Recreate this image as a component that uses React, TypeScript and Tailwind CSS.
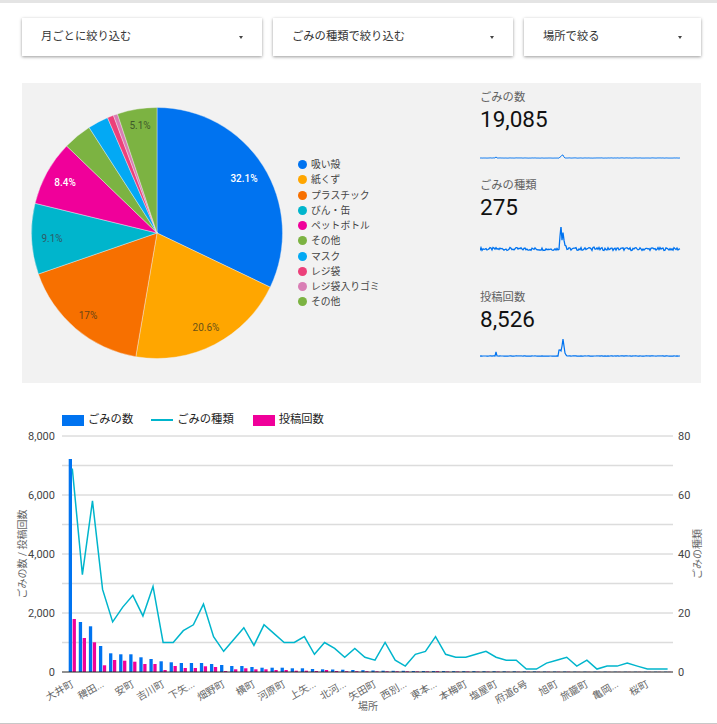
const font = "font-['Roboto','Noto_Sans_CJK_JP',sans-serif]"

const slices = [
  { name: '吸い殻', pct: 32.1, color: '#0073f0' },
  { name: '紙くず', pct: 20.6, color: '#ffa600' },
  { name: 'プラスチック', pct: 17, color: '#f77000' },
  { name: 'びん・缶', pct: 9.1, color: '#00b5cc' },
  { name: 'ペットボトル', pct: 8.4, color: '#f0009a' },
  { name: 'その他', pct: 3.7, color: '#7cb342' },
  { name: 'マスク', pct: 2.65, color: '#03a9f4' },
  { name: 'レジ袋', pct: 0.8, color: '#ec407a' },
  { name: 'レジ袋入りゴミ', pct: 0.55, color: '#d97eb5' },
  { name: 'その他', pct: 5.1, color: '#7cb342' },
]

const kinds = [69, 33, 58, 28, 17, 22, 26, 19, 29, 10, 10, 14, 16, 23, 12, 7, 11, 15, 9, 16, 13, 10, 10, 12, 6, 10, 8, 5, 8, 5, 4, 10, 4, 2, 6, 7, 12, 6, 5, 5, 6, 7, 5, 4, 4, 1, 1, 3, 4, 5, 2, 4, 1, 2, 2, 3, 2, 1, 1, 1]
// bar heights in px, read off the picture
const bluePx = [213, 50, 45.7, 26, 18.7, 17.7, 17.7, 14.7, 13, 10.7, 9.7, 9, 9, 9, 8, 7, 6, 6, 5, 4.3, 4.3, 4.3, 3.7, 3.7, 3, 2.7, 2.5, 2.3, 2, 1.8, 1.5, 1.3, 1.2, 1.2, 1, 1, 1, 1, 0.9, 0.9, 0.9, 0.8, 0.8, 0.7, 0.7, 0.6, 0.6, 0.5, 0.5, 0.5, 0.4, 0.4, 0.4, 0.4, 0.3, 0.3, 0.3, 0.3, 0.3, 0.3]
const pinkPx = [53, 34, 29.7, 6.7, 12, 11.3, 10.3, 8, 8, 2, 6, 4, 4, 5.7, 5, 1, 2.7, 3.7, 2.7, 2.7, 2, 2, 1.3, 1.3, 1, 2, 1, 0.8, 0.8, 0.8, 0.7, 0.7, 0.7, 0.7, 0.6, 0.6, 0.8, 0.5, 0.5, 0.5, 0.4, 0.4, 0.4, 0.3, 0.3, 0.3, 0.3, 0.3, 0.3, 0.3, 0.2, 0.2, 0.2, 0.2, 0.2, 0.2, 0.2, 0.2, 0.2, 0.2]
const towns = ['大井町', '稗田...', '安町', '吉川町', '下矢...', '畑野町', '横町', '河原町', '上矢...', '北河...', '矢田町', '西別...', '東本...', '本梅町', '塩屋町', '府道6号', '旭町', '旅籠町', '亀岡...', '桜町']

function Filter({ label, width }: { label: string; width: string }) {
  return (
    <div className={`${width} h-[38px] flex items-center justify-between px-[19px] bg-white shadow-[0_1px_3px_rgba(0,0,0,0.4)] text-[11.3px] text-[#333]`}>
      <span>{label}</span>
      <span className="w-0 h-0 border-x-[2.5px] border-x-transparent border-t-[3px] border-t-[#444]" />
    </div>
  )
}

function Pie() {
  const cx = 135
  const cy = 126
  const r = 125.5
  let acc = 0
  const pt = (p: number, rad: number) => {
    const a = (p / 100) * Math.PI * 2
    return [cx + rad * Math.sin(a), cy - rad * Math.cos(a)]
  }
  return (
    <svg width="270" height="252" className="shrink-0">
      {slices.map((s, i) => {
        const [x1, y1] = pt(acc, r)
        const [x2, y2] = pt(acc + s.pct, r)
        acc += s.pct
        return <path key={i} d={`M${cx} ${cy}L${x1} ${y1}A${r} ${r} 0 0 1 ${x2} ${y2}Z`} fill={s.color} stroke="#f2f2f2" strokeWidth="0.4" />
      })}
      <text x="222" y="75" textAnchor="middle" fontSize="10" fill="#ffffff" fontWeight="500">32.1%</text>
      <text x="184" y="224" textAnchor="middle" fontSize="10" fill="#6b5218">20.6%</text>
      <text x="66" y="212" textAnchor="middle" fontSize="10" fill="#6b4416">17%</text>
      <text x="30" y="135" textAnchor="middle" fontSize="10" fill="#2f5a66">9.1%</text>
      <text x="43" y="79" textAnchor="middle" fontSize="10" fill="#ffffff" fontWeight="500">8.4%</text>
      <text x="118" y="22" textAnchor="middle" fontSize="10" fill="#3f5a2a">5.1%</text>
    </svg>
  )
}

function Legend() {
  return (
    <ul className="flex flex-col w-[96px] pl-[6px] pt-[50px] text-[9.8px] leading-[15.25px] text-[#444]">
      {slices.map((s, i) => (
        <li key={i} className="flex items-center gap-[4px] whitespace-nowrap">
          <span className="w-[9px] h-[9px] rounded-full" style={{ backgroundColor: s.color }} />
          {s.name}
        </li>
      ))}
    </ul>
  )
}

// repeatable noise so the sparkline doesn't change between runs
const noise = (i: number) => {
  const v = Math.sin(i * 12.9898) * 43758.5453
  return v - Math.floor(v) - 0.5
}

function Spark({ base, amp, width, peaks }: { base: number; amp: number; width: number; peaks: Record<number, number> }) {
  const pts = Array.from({ length: 201 }, (_, i) => {
    const y = base - (peaks[i] ?? 0) - noise(i) * amp
    return `${i},${y.toFixed(1)}`
  }).join(' ')
  return (
    <svg width="201" height="30" className="block">
      <polyline points={pts} fill="none" stroke="#0073f0" strokeWidth={width} />
    </svg>
  )
}

function Metric({ label, value, height, gap, children }: { label: string; value: string; height: string; gap: string; children: React.ReactNode }) {
  return (
    <div className={height}>
      <div className="text-[11.3px] leading-[16px] text-[#616161]">{label}</div>
      <div className="text-[22.5px] leading-[28px] -mt-[1px] text-[#111]">{value}</div>
      <div className={gap}>{children}</div>
    </div>
  )
}

function Combo() {
  const zero = 244
  const left = 62
  const right = 673
  const cx = (i: number) => 72.3 + i * 10.09
  const grid = [1, 2, 3, 4, 5, 6, 7, 8]
  const linePts = kinds.map((v, i) => `${cx(i)},${zero - v * 2.95}`).join(' ')
  return (
    <svg width="717" height="295" className="block">
      {grid.map(g => (
        <line key={g} x1={left} x2={right} y1={zero - g * 29.5} y2={zero - g * 29.5} stroke={g % 2 ? '#dcdcdc' : '#cccccc'} strokeWidth={g % 2 ? 1.4 : 1} />
      ))}
      {bluePx.map((h, i) => (
        <rect key={i} x={cx(i) - 3.6} y={zero - h} width="3.3" height={h} fill="#0073f0" />
      ))}
      {pinkPx.map((h, i) => (
        <rect key={i} x={cx(i) + 0.3} y={zero - h} width="3.3" height={h} fill="#f0009a" />
      ))}
      <line x1={left} x2={right} y1={zero} y2={zero} stroke="#222" strokeWidth="1" />
      <polyline points={linePts} fill="none" stroke="#00b5cc" strokeWidth="1.5" />
      {[0, 2000, 4000, 6000, 8000].map((v, i) => (
        <text key={v} x="55" y={zero - i * 59 + 4} textAnchor="end" fontSize="11" fill="#444">{v.toLocaleString('en-US')}</text>
      ))}
      {[0, 20, 40, 60, 80].map((v, i) => (
        <text key={v} x="678" y={zero - i * 59 + 4} fontSize="11" fill="#444">{v}</text>
      ))}
      {towns.map((t, i) => {
        const x = cx(i * 3) + 2
        const y = zero + 14
        return <text key={i} x={x} y={y} textAnchor="end" fontSize="10" fill="#666" transform={`rotate(-30 ${x} ${y})`}>{t}</text>
      })}
      <text x="368" y="282" textAnchor="middle" fontSize="10" fill="#666">場所</text>
      <text transform="translate(26 126) rotate(-90)" textAnchor="middle" fontSize="10" fill="#666">ごみの数 / 投稿回数</text>
      <text transform="translate(701 126) rotate(-90)" textAnchor="middle" fontSize="10" fill="#666">ごみの種類</text>
    </svg>
  )
}

export default function App() {
  return (
    <div className={`${font} w-[717px] h-[724px] bg-white border-b border-b-[#c8c8c8] overflow-hidden`}>
      <div className="h-[3px] bg-[#e4e4e4]" />
      <div className="flex gap-[11px] pl-[22px] pt-[15px]">
        <Filter label="月ごとに絞り込む" width="w-[240px]" />
        <Filter label="ごみの種類で絞り込む" width="w-[240px]" />
        <Filter label="場所で絞る" width="w-[177px]" />
      </div>
      <div className="flex ml-[22px] mt-[27px] w-[679px] h-[300px] bg-[#f2f2f2]">
        <div className="flex items-start pt-[24px]">
          <Pie />
          <Legend />
        </div>
        <div className="ml-[92px] pt-[7px] w-[201px]">
          <Metric label="ごみの数" value="19,085" height="h-[88px]" gap="mt-[6px]">
            <Spark base={19} amp={0.2} width={0.9} peaks={{ 16: 1, 80: 1, 81: 1.5, 82: 3, 83: 3, 84: 1 }} />
          </Metric>
          <Metric label="ごみの種類" value="275" height="h-[112px]" gap="mt-[6px]">
            <Spark base={22} amp={3} width={1.3} peaks={{ 79: 1, 80: 12, 81: 23, 82: 10, 83: 17, 84: 10, 85: 4, 86: 3, 110: 2, 113: 3, 114: 2 }} />
          </Metric>
          <Metric label="投稿回数" value="8,526" height="h-[90px]" gap="mt-[1px]">
            <Spark base={22} amp={0.3} width={1.2} peaks={{ 16: 4, 79: 6, 80: 6, 81: 5, 82: 10, 83: 17, 84: 10, 85: 3, 86: 1 }} />
          </Metric>
        </div>
      </div>
      <div className="flex items-center h-[16px] mt-[29px] pl-[62px] text-[11.3px] text-[#222]">
        <span className="w-[22px] h-[11px] bg-[#0073f0]" />
        <span className="ml-[4px]">ごみの数</span>
        <span className="ml-[18px] w-[22px] h-[1.5px] bg-[#00b5cc]" />
        <span className="ml-[4px]">ごみの種類</span>
        <span className="ml-[19px] w-[22px] h-[11px] bg-[#f0009a]" />
        <span className="ml-[4px]">投稿回数</span>
      </div>
      <Combo />
    </div>
  )
}
